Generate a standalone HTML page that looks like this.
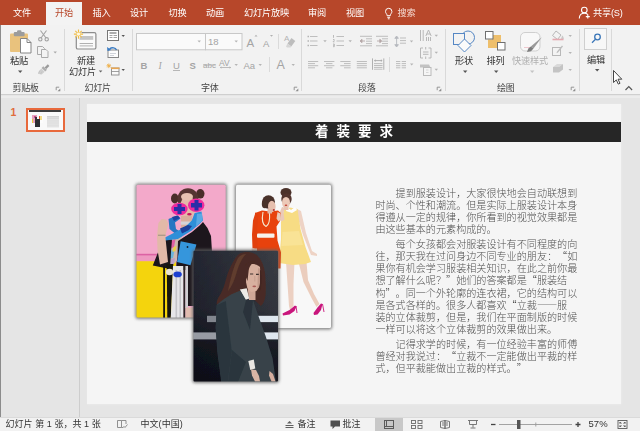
<!DOCTYPE html>
<html lang="zh-CN">
<head>
<meta charset="utf-8">
<title>PowerPoint</title>
<style>
*{margin:0;padding:0;box-sizing:border-box;}
html,body{width:640px;height:431px;overflow:hidden;background:#e6e6e6;}
body{position:relative;font-family:"Liberation Sans","Noto Sans CJK SC",sans-serif;font-size:10px;color:#333;}
.abs{position:absolute;}
#tabbar{opacity:0.999;position:absolute;left:0;top:0;width:640px;height:25px;background:#b7472a;}
.tab{position:absolute;top:5.500px;font-size:9.2px;color:#fff;white-space:nowrap;line-height:14px;letter-spacing:-0.2px;}
#tab-active{position:absolute;left:46px;top:2px;width:36px;height:24px;background:#f3f3f3;}
#ribbon{opacity:0.999;position:absolute;left:0;top:25px;width:640px;height:69.5px;background:#f2f2f2;border-bottom:1px solid #cfcfcf;}
.glabel{position:absolute;top:56.500px;font-size:9px;color:#444;white-space:nowrap;line-height:12px;letter-spacing:-0.2px;}
.blabel{position:absolute;font-size:9.2px;color:#333;white-space:nowrap;line-height:11px;letter-spacing:-0.2px;text-align:center;}
.vsep{position:absolute;top:4px;width:1px;height:60px;background:#dcdcdc;}
#work{position:absolute;left:0;top:96px;width:640px;height:321px;background:#e5e5e5;}
#leftpane{position:absolute;left:0;top:96px;width:80px;height:321px;background:#e5e5e5;border-right:1px solid #cdcdcd;}
#slide{position:absolute;left:87px;top:103px;width:535px;height:301px;}
#slidebg{position:absolute;left:0.3px;top:0.6px;width:534px;height:300.5px;background:#f5f5f5;box-shadow:0 0 1.5px 0.5px #efefef;}
#titlebar{position:absolute;left:0.3px;top:19px;width:534px;height:20px;background:#262626;}
#title{position:absolute;left:0;top:19px;width:535px;height:20px;line-height:19px;text-align:center;color:#fff;font-weight:bold;font-size:13.5px;letter-spacing:8px;padding-left:7px;opacity:0.999;}
#text{position:absolute;left:288.4px;top:84.6px;width:204px;color:#505050;font-size:10.1px;line-height:12.2px;font-weight:300;opacity:0.999;text-spacing-trim:space-all;}
#text p{text-indent:20.2px;margin-bottom:2.4px;white-space:nowrap;}
#text q{quotes:none;font-family:"Noto Sans CJK SC",sans-serif;line-height:0;}
#status{opacity:0.999;position:absolute;left:0;top:417.6px;width:640px;height:13.4px;background:#f2f2f2;box-shadow:0 -1px 0 #dadada;}
.st{position:absolute;top:0.9px;font-size:9px;color:#333;white-space:nowrap;line-height:12px;letter-spacing:0.05px;}
</style>
</head>
<body>
<div id="tabbar">
  <div id="tab-active"></div>
  <span class="tab" style="left:13px">文件</span>
  <span class="tab" style="left:55px;color:#b7472a">开始</span>
  <span class="tab" style="left:92.5px">插入</span>
  <span class="tab" style="left:130px">设计</span>
  <span class="tab" style="left:168.5px">切换</span>
  <span class="tab" style="left:206px">动画</span>
  <span class="tab" style="left:244px">幻灯片放映</span>
  <span class="tab" style="left:308px">审阅</span>
  <span class="tab" style="left:346px">视图</span>
  <span class="tab" style="left:397.5px;color:#f6ddd5">搜索</span>
  <span class="tab" style="left:593px">共享(S)</span>
</div>
<div id="ribbon">
  <span class="blabel" style="left:9px;top:30.500px;width:20px">粘贴</span>
  <span class="blabel" style="left:76px;top:30.500px;width:20px">新建</span>
  <span class="blabel" style="left:68px;top:41.5px;width:29px">幻灯片</span>
  <span class="blabel" style="left:454px;top:30.500px;width:20px">形状</span>
  <span class="blabel" style="left:485.5px;top:30.5px;width:20px">排列</span>
  <span class="blabel" style="left:510px;top:30.500px;width:40px;color:#b0b0b0">快速样式</span>
  <span class="blabel" style="left:586px;top:29.600px;width:20px">编辑</span>
  <span class="glabel" style="left:12.5px">剪贴板</span>
  <span class="glabel" style="left:84.5px">幻灯片</span>
  <span class="glabel" style="left:201px">字体</span>
  <span class="glabel" style="left:358px">段落</span>
  <span class="glabel" style="left:497px">绘图</span>
</div>
<svg id="icons" class="abs" style="left:0;top:0" width="640" height="96" viewBox="0 0 640 96" fill="none" stroke-linecap="butt">
  <!-- lightbulb -->
  <g stroke="#fff" stroke-width="1" fill="none">
    <path d="M385.5 11.5a3.2 3.2 0 0 1 6.4 0c0 1.8-1.6 2.4-1.6 4.2h-3.2c0-1.8-1.6-2.4-1.6-4.2z"/>
    <path d="M387.3 17.3h2.8M387.8 18.8h1.8"/>
  </g>
  <!-- share person -->
  <g stroke="#fff" stroke-width="1.1" fill="none">
    <circle cx="584.3" cy="10" r="2.8"/>
    <path d="M579.3 18.5c0-3.5 2.2-5.4 5-5.4 1.6 0 2.8 0.6 3.6 1.5"/>
    <path d="M587.8 14.6v4M585.8 16.6h4"/>
  </g>

  <!-- separators -->
  <g stroke="#d9d9d9" stroke-width="1">
    <path d="M64.5 29v62M132.5 29v62M301.5 29v62M445.5 29v62M579.5 29v62M611.5 29v62"/>
  </g>

  <!-- paste icon -->
  <g>
    <rect x="10" y="33.5" width="18" height="18.5" rx="1" fill="#e9c27d"/>
    <rect x="13.8" y="32" width="10.8" height="4.3" rx="1" fill="#9c9c9c"/>
    <rect x="17" y="30.300" width="4.500" height="3" rx="1.300" fill="#9c9c9c"/>
    <path d="M20.5 38.5h6.5l4 4v10.5h-10.5z" fill="#fff" stroke="#858585" stroke-width="1"/>
    <path d="M27 38.5v4h4" stroke="#858585" stroke-width="1" fill="none"/>
  </g>
  <path d="M18 70.5l2.2 2.4 2.2-2.4z" fill="#555"/>

  <!-- scissors (gray) -->
  <g stroke="#a3a3a3" stroke-width="1.1" fill="none">
    <path d="M40.5 30.5l5.5 7.5M46.5 30.5l-5.5 7.5"/>
    <circle cx="40.3" cy="39.3" r="1.7"/>
    <circle cx="46.7" cy="39.3" r="1.7"/>
  </g>
  <!-- copy (gray) -->
  <g stroke="#a9a9a9" stroke-width="1" fill="#f3f3f3">
    <path d="M37.5 46.5h5l2 2v6h-7z"/>
    <path d="M41.500 49.5h4.500l2 2v6h-6.500z"/>
  </g>
  <path d="M53.500 51.500l1.700 1.900 1.700-1.900z" fill="#aaa"/>
  <!-- format painter (gray) -->
  <g>
    <path d="M47.800 64.300l1.600 1.600-3 3.200-1.800-1.600z" fill="#9a9a9a"/>
    <path d="M43.300 66.300l3.600 3.400-1.600 1.800-3.700-3.400z" fill="#adadad"/>
    <path d="M41.300 68.600l3.400 3.200-3 2.600-3.600-0.600 0.500-2.200z" fill="#cfcfcf"/>
    <path d="M40 70.500l-1.500 3M42 71.500l-1.600 2.700" stroke="#bdbdbd" stroke-width="0.600"/>
  </g>
  <!-- launcher marks -->
  <g stroke="#8c8c8c" stroke-width="0.9" fill="none">
    <path d="M56 87.500h-0v0M56.200 87.200h3M56.200 87.200v3"/>
    <path d="M294.200 87.200h3M294.200 87.200v3"/>
    <path d="M437.200 87.200h3M437.200 87.200v3"/>
    <path d="M571.200 87.200h3M571.200 87.200v3"/>
  </g>
  <g fill="#8c8c8c">
    <path d="M60.300 88.500v2.800h-2.800z"/><path d="M298.300 88.500v2.800h-2.800z"/><path d="M441.300 88.500v2.800h-2.800z"/><path d="M575.300 88.500v2.800h-2.800z"/>
  </g>

  <!-- new slide -->
  <g>
    <rect x="76.300" y="32.600" width="19.600" height="16.400" rx="1.600" fill="#fafafa" stroke="#8c8c8c" stroke-width="1.200"/>
    <rect x="79.600" y="36" width="13.600" height="3.800" fill="#c4c4c4"/>
    <path d="M79.600 43.500h13.400M79.600 45.900h13.400" stroke="#a8a8a8" stroke-width="0.900"/>
    <circle cx="78.500" cy="34.100" r="3.400" fill="#f3f3f3"/>
    <g stroke="#f1bd45" stroke-width="1.100">
      <path d="M78.500 29.500v9.200M73.900 34.100h9.200M75.300 30.900l6.400 6.400M81.700 30.900l-6.400 6.400"/>
    </g>
    <circle cx="78.500" cy="34.100" r="1.700" fill="#fff8e0"/>
  </g>
  <path d="M98.800 70.600l1.800 2 1.800-2z" fill="#666"/>
  <!-- layout -->
  <g>
    <rect x="107.500" y="30.500" width="11" height="10" fill="#fff" stroke="#777" stroke-width="1"/>
    <path d="M109.500 33h7" stroke="#8a8a8a" stroke-width="1.400"/>
    <path d="M109.500 35.500h3M109.500 37.500h3M113.500 35.500h3.500M113.500 37.500h3.500" stroke="#9a9a9a" stroke-width="0.900"/>
  </g>
  <path d="M121.500 35l1.700 1.900 1.700-1.900z" fill="#555"/>
  <!-- reset -->
  <g>
    <rect x="108" y="50" width="10.500" height="7.500" fill="#fdfdfd" stroke="#888" stroke-width="1"/>
    <path d="M110 53.500h6M110 55.500h4" stroke="#c4c8d0" stroke-width="0.800"/>
    <path d="M116.500 50c-1-2.300-4.500-3-7-1" stroke="#3a7cc4" stroke-width="1.400" fill="none"/>
    <path d="M107 47l0.500 4 3.800-1z" fill="#3a7cc4"/>
  </g>
  <!-- section -->
  <g>
    <g stroke="#eeb04a" stroke-width="0.900"><path d="M108.800 63.500v4.600M106.500 65.800h4.600M107.200 64.200l3.200 3.200M110.400 64.200l-3.200 3.200"/></g>
    <rect x="111.500" y="68" width="7.500" height="7" fill="#fafafa" stroke="#8a8a8a" stroke-width="0.900"/>
    <path d="M111 68.300h8.500" stroke="#e8a652" stroke-width="1.600"/>
    <path d="M111.500 71.500h7.500" stroke="#8a8a8a" stroke-width="0.800"/>
  </g>
  <path d="M121.500 69l1.700 1.900 1.700-1.900z" fill="#555"/>

  <!-- font boxes -->
  <rect x="136.500" y="33.500" width="69" height="16.300" fill="#fafafa" stroke="#c8c8c8" stroke-width="1"/>
  <rect x="205.500" y="33.500" width="36.500" height="16.300" fill="#fafafa" stroke="#c8c8c8" stroke-width="1"/>
  <path d="M197.500 40.500l1.700 1.900 1.700-1.900z" fill="#b5b5b5"/>
  <path d="M234.500 40.500l1.700 1.900 1.700-1.900z" fill="#b5b5b5"/>
  <path d="M278.500 34v15M269.500 57v15" stroke="#dadada" stroke-width="1"/>
  <!-- font letters -->
  <g font-family="Liberation Sans, sans-serif" fill="#a4a4a4">
    <text x="208" y="45" font-size="9.500">18</text>
    <text x="246.500" y="46.500" font-size="11.500">A</text>
    <text x="263" y="46.500" font-size="9.500">A</text>
    <text x="140.500" y="68.500" font-size="9.500" font-weight="bold">B</text>
    <text x="158.500" y="68.500" font-size="9.500" font-style="italic" font-family="Liberation Serif, serif">I</text>
    <text x="173" y="68.500" font-size="9.500">U</text>
    <text x="189.500" y="68.500" font-size="9.500" font-weight="bold">S</text>
    <text x="203" y="68" font-size="8">abc</text>
    <text x="219" y="66" font-size="8.500">AV</text>
    <text x="243.500" y="68.500" font-size="9.500">Aa</text>
    <text x="276.500" y="69" font-size="12.500">A</text>
  </g>
  <path d="M173 70.500h7M203 65h12.500" stroke="#b0b0b0" stroke-width="0.900"/>
  <path d="M254.500 36.500l1.500-1.800 1.500 1.800zM270 35l1.500 1.800 1.500-1.800z" fill="#b0b0b0"/>
  <!-- clear formatting -->
  <g>
    <text x="284" y="41" font-size="8" font-family="Liberation Sans, sans-serif" fill="#b4b4b4">A</text>
    <path d="M291.500 38l3.800 3-4 5.500-3.800-3z" fill="#bdbdbd"/>
    <path d="M287.500 43.500l3.800 3-0.800 1h-3.500l-1-1z" fill="#d6d6d6"/>
  </g>
  <!-- small arrows font row 2 -->
  <g fill="#b5b5b5">
    <path d="M234.500 64l1.700 1.900 1.700-1.900z"/>
    <path d="M258.500 64l1.700 1.900 1.700-1.900z"/>
    <path d="M291.500 64l1.700 1.900 1.700-1.900z"/>
  </g>
  <path d="M220 67.500h11" stroke="#b5b5b5" stroke-width="0.900"/>
  <path d="M220 67.500l1.500-1.300v2.600zM231 67.500l-1.500-1.300v2.600z" fill="#b5b5b5"/>

  <!-- paragraph group row 1 -->
  <g stroke="#bababa" stroke-width="0.950">
    <path d="M310 36.500h7.500M310 41h7.500M310 45.500h7.500"/>
    <path d="M336.500 36.500h7.500M336.500 41h7.500M336.500 45.500h7.500"/>
    <path d="M360 36.300h12M366 38.800h6M366 41.200h6M366 43.600h6M360 45.800h12"/>
    <path d="M376 36.300h12M382 38.800h6M382 41.200h6M382 43.600h6M376 45.800h12"/>
    <path d="M400 38h6M400 40.600h6M400 43.200h6"/>
  </g>
  <g stroke="#b4b4b4" stroke-width="1.300">
    <path d="M307.500 36.500h1.500M307.500 41h1.500M307.500 45.500h1.500"/>
  </g>
  <g stroke="#b4b4b4" stroke-width="0.900">
    <path d="M333.500 35v2.800M333 39.500h1.200v1l-1.200 1.300h1.500M333 44h1.300v1.300h-1 1v1.400h-1.300"/>
  </g>
  <g stroke="#b5a8a8" stroke-width="0.900" fill="#b5a8a8">
    <path d="M360.500 41h4.500M377 41h4" fill="none"/>
    <path d="M360 41l2-1.700v3.400zM381.800 41l-2-1.700v3.400z"/>
  </g>
  <g stroke="#b6b9be" stroke-width="0.900" fill="#b6b9be">
    <path d="M396.600 37.500v8" fill="none"/>
    <path d="M396.600 36l1.800 2.300h-3.600zM396.600 47l1.800-2.300h-3.600z"/>
  </g>
  <g fill="#b5b5b5">
    <path d="M323.300 40.300l1.700 1.900 1.700-1.900z"/>
    <path d="M348.500 40.300l1.700 1.900 1.700-1.900z"/>
    <path d="M409.800 40.500l1.700 1.900 1.700-1.900z"/>
    <path d="M434.600 34.800l1.700 1.900 1.700-1.900z"/>
    <path d="M434.600 51.800l1.700 1.900 1.700-1.900z"/>
    <path d="M434.600 68.800l1.700 1.900 1.700-1.900z"/>
    <path d="M410 63.600l1.700 1.900 1.700-1.900z"/>
  </g>
  <!-- text direction -->
  <g stroke="#b4b4b4" stroke-width="0.950" fill="none">
    <path d="M420.500 30v11M423.200 30v11"/>
    <path d="M425.800 36l2.700-6 2.700 6M426.800 34h3.400"/>
    <path d="M426.500 37v4M428.500 37v4M430.500 37v4"/>
  </g>
  <!-- align text -->
  <g stroke="#b4b4b4" stroke-width="0.950" fill="none">
    <path d="M423 48h-2.500v10h2.500M428.500 48h2.500v10h-2.500"/>
    <path d="M423 52h5.500M423 54.300h5.500"/>
    <path d="M425.700 47v2.500M425.700 56.500v2.500"/>
  </g>
  <!-- smartart -->
  <g>
    <path d="M420 64.500h9l1.500 3h-10.500z" fill="#c2c2c2"/>
    <rect x="423.500" y="67.500" width="7.500" height="8" fill="#f5f5f5" stroke="#b8b8b8" stroke-width="0.950"/>
    <path d="M426 70h2.500M426 72.500h2.500" stroke="#cfcfcf" stroke-width="0.800"/>
  </g>
  <!-- paragraph row 2 -->
  <g stroke="#bababa" stroke-width="0.950">
    <path d="M308 61.500h10.200M308 63.600h7M308 65.700h10.200M308 67.800h7"/>
    <path d="M324 61.500h10.400M326 63.600h6.400M324 65.700h10.400M326 67.800h6.400"/>
    <path d="M340.300 61.500h10.300M344 63.600h6.600M340.300 65.700h10.300M344 67.800h6.600"/>
    <path d="M356.800 61.500h10.100M356.800 63.600h10.100M356.800 65.700h10.100M356.800 67.800h10.100"/>
    <path d="M374 63.600h8.500M374 65.500h8.500M374 67.400h8.500M374 69.200h8.500"/>
    <path d="M372.500 58.400v11.400M383.800 58.400v11.400M374.500 60.600h7.500" stroke="#adadad"/>
    <path d="M396 61.500h4.300M401.700 61.500h4.300M396 63.600h4.300M401.700 63.600h4.300M396 65.700h4.300M401.700 65.700h4.300M396 67.800h4.300M401.700 67.800h4.300"/>
  </g>
  <path d="M374 60.600l1.600-1.300v2.600zM382.500 60.600l-1.600-1.300v2.600z" fill="#adadad"/>
  <path d="M389.500 57v15" stroke="#dadada" stroke-width="1"/>

  <!-- shapes icon -->
  <g fill="none" stroke="#5587c4" stroke-width="1">
    <circle cx="468" cy="37.500" r="6.500"/>
    <rect x="453.500" y="33.500" width="11" height="11" fill="#f3f3f3"/>
    <path d="M464.500 39l6.500 6.500-6.500 6.500-6.500-6.500z" fill="#fbfbfb"/>
  </g>
  <path d="M463 70.500l2.200 2.400 2.200-2.400z" fill="#555"/>
  <!-- arrange icon -->
  <g>
    <rect x="492" y="35" width="9" height="9" fill="#eebf6c"/>
    <rect x="488" y="39.500" width="9" height="8.500" fill="#eebf6c"/>
    <rect x="485.500" y="31.500" width="7.500" height="7.500" fill="#fff" stroke="#6f6f6f" stroke-width="1"/>
    <rect x="497.500" y="42.500" width="7.500" height="7.500" fill="#fff" stroke="#6f6f6f" stroke-width="1"/>
  </g>
  <path d="M494 70.500l2.200 2.400 2.200-2.400z" fill="#555"/>
  <!-- quick styles -->
  <g>
    <rect x="520.500" y="32.500" width="19.500" height="18.500" rx="4.500" fill="#f8f8f8" stroke="#cfcfcf" stroke-width="1"/>
    <path d="M524 47.500h6" stroke="#ecc2ca" stroke-width="0.900"/>
    <path d="M541.800 37.200l-8.300 11.300-2.700-2z" fill="#9a9a9a"/>
    <path d="M530.800 46.500l2.700 2-2.500 2.800-4 0.700 1.300-3.500z" fill="#7e7e7e"/>
  </g>
  <path d="M530 70.500l2.200 2.400 2.200-2.400z" fill="#c4c4c4"/>
  <!-- fill / outline / effects -->
  <g>
    <path d="M556 31l5 4-3.500 4.500-5-4z" fill="#f3f3f3" stroke="#b8b8b8" stroke-width="1"/>
    <path d="M562.500 35.500c0.800 1.200 1.200 2 1.200 2.700a1.200 1.200 0 0 1-2.400 0c0-0.700 0.400-1.500 1.200-2.700z" fill="#c9c9c9"/>
    <path d="M552.500 39.500h11" stroke="#e4a9b0" stroke-width="1.600"/>
    <rect x="552.500" y="47.500" width="8" height="8" fill="#f3f3f3" stroke="#b8b8b8" stroke-width="1"/>
    <path d="M563 46.500l-5 6-1.500 0.800 0.500-1.800 5-6z" fill="#bdbdbd"/>
    <path d="M553 67l4-3h6l-4 3z" fill="#d9d9d9"/>
    <path d="M553 67h6v5.500h-6zM559 67l4-3v5.500l-4 3z" fill="#c4c4c4"/>
  </g>
  <g fill="#b5b5b5">
    <path d="M568.500 35l1.700 1.900 1.700-1.900z"/>
    <path d="M568.500 52l1.700 1.900 1.700-1.900z"/>
    <path d="M568.500 69l1.700 1.900 1.700-1.900z"/>
  </g>
  <!-- edit -->
  <rect x="584.500" y="28.500" width="22" height="21" fill="#f7f7f7" stroke="#cfcfcf" stroke-width="1"/>
  <g stroke="#3a76b8" stroke-width="1.300" fill="none">
    <circle cx="597.500" cy="37" r="2.800"/>
    <path d="M595.500 39.200l-3.500 3.500"/>
  </g>
  <path d="M595 69l2.200 2.400 2.200-2.400z" fill="#555"/>
  <!-- mouse cursor -->
  <path d="M613.500 70.500v12l2.800-2.600 2 4.200 1.700-0.800-2-4.100h3.800z" fill="#fff" stroke="#333" stroke-width="0.900" stroke-linejoin="round"/>
  <!-- collapse chevron -->
  <path d="M625.500 90l3.300-3.300 3.300 3.300" stroke="#555" stroke-width="1.200" fill="none"/>
</svg>
<div id="work"></div>
<div id="leftpane"></div>
<div id="band" class="abs" style="left:1px;top:95.5px;width:639px;height:2px;background:#ececec"></div>
<span class="abs" style="left:10.6px;top:106.2px;font-size:10.5px;line-height:12px;color:#e06c3c;font-weight:bold;font-family:'Liberation Sans',sans-serif">1</span>
<div class="abs" id="thumb" style="left:26px;top:107.7px;width:39px;height:24.1px;border:2.6px solid #e8693c;background:#f9f9f9;overflow:hidden">
  <div class="abs" style="left:0.5px;top:0.8px;width:32.8px;height:1.7px;background:#3c3c3c"></div>
  <div class="abs" style="left:3.5px;top:5.2px;width:5.5px;height:8px;background:#e9a1bd"></div>
  <div class="abs" style="left:3.5px;top:9.7px;width:1.7px;height:3.5px;background:#ecd038"></div>
  <div class="abs" style="left:6px;top:6px;width:2px;height:2px;background:#c0508a"></div>
  <div class="abs" style="left:9.5px;top:5.2px;width:5.7px;height:8.6px;background:#fcfcfc"></div>
  <div class="abs" style="left:10.8px;top:6.7px;width:1.6px;height:2.7px;background:#e8602a"></div>
  <div class="abs" style="left:12.4px;top:6.7px;width:1.6px;height:4px;background:#f3dc8a"></div>
  <div class="abs" style="left:7px;top:9.2px;width:5px;height:8px;background:#2c2e33"></div>
  <div class="abs" style="left:6.5px;top:7.5px;width:2px;height:3px;background:#3a3036"></div>
  <div class="abs" style="left:18.5px;top:6px;width:12.5px;height:0.6px;background:#d2d2d2;box-shadow:0 1px 0 #dcdcdc,0 2px 0 #d8d8d8,0 3.2px 0 #dedede,0 4.2px 0 #dadada,0 5.2px 0 #dedede,0 6.2px 0 #dcdcdc,0 7.2px 0 #dedede,0 8.4px 0 #d6d6d6,0 9.4px 0 #dadada,0 10.4px 0 #e0e0e0"></div>
</div>
<div id="slide">
  <div id="slidebg"></div>
  <div id="titlebar"></div>
  <div id="title">着装要求</div>
  <div id="text">
    <p>提到服装设计，大家很快地会自动联想到<br>时尚、个性和潮流。但是实际上服装设计本身<br>得遵从一定的规律，你所看到的视觉效果都是<br>由这些基本的元素构成的。</p>
    <p>每个女孩都会对服装设计有不同程度的向<br>往，那天我在过问身边不同专业的朋友：<q>“</q>如<br>果你有机会学习服装相关知识，在此之前你最<br>想了解什么呢？<q>”</q>她们的答案都是<q>“</q>服装结<br>构<q>”</q>。同一个外轮廓的连衣裙，它的结构可以<br>是各式各样的。很多人都喜欢<q>“</q>立裁<q>——</q>服<br>装的立体裁剪，但是，我们在平面制版的时候<br>一样可以将这个立体裁剪的效果做出来。</p>
    <p>记得求学的时候，有一位经验丰富的师傅<br>曾经对我说过：<q>“</q>立裁不一定能做出平裁的样<br>式，但平裁能做出立裁的样式。<q>”</q></p>
  </div>
</div>
<svg id="photos" class="abs" style="left:0;top:0" width="640" height="431" viewBox="0 0 640 431">
  <defs>
    <filter id="sh" x="-10%" y="-10%" width="120%" height="120%"><feGaussianBlur stdDeviation="1.400"/></filter>
    <filter id="b1" x="-5%" y="-5%" width="110%" height="110%"><feGaussianBlur stdDeviation="0.5"/></filter>
    <clipPath id="c1"><rect x="136.500" y="184.700" width="89.200" height="132.800" rx="1.500"/></clipPath>
    <clipPath id="c2"><rect x="236" y="184.700" width="95" height="143.300" rx="1.500"/></clipPath>
    <clipPath id="c3"><rect x="193.500" y="250.700" width="84.500" height="130.800" rx="1"/></clipPath>
    <linearGradient id="dg" x1="0" y1="0" x2="1" y2="0">
      <stop offset="0" stop-color="#232631"/><stop offset="0.450" stop-color="#2d3039"/><stop offset="1" stop-color="#3b3e46"/>
    </linearGradient>
    <linearGradient id="dg2" x1="0" y1="0" x2="0" y2="1">
      <stop offset="0" stop-color="#000" stop-opacity="0"/><stop offset="0.450" stop-color="#02030a" stop-opacity="0.150"/><stop offset="0.750" stop-color="#04050e" stop-opacity="0.600"/><stop offset="1" stop-color="#05060f" stop-opacity="0.750"/>
    </linearGradient>
  </defs>

  <!-- PHOTO 1 : pink -->
  <rect x="135.300" y="183.500" width="91.600" height="135.400" rx="3" fill="#6e6e6e" opacity="0.850" filter="url(#sh)"/>
  <g clip-path="url(#c1)" filter="url(#b1)">
    <rect x="136" y="184" width="91" height="134" fill="#f3a9ca"/>
    <rect x="136" y="255" width="91" height="6.500" fill="#ee99c1"/>
    <rect x="136" y="253.800" width="91" height="1.600" fill="#dc62a4"/>
    <rect x="136" y="261.200" width="40" height="58" fill="#f4d40c"/>
    <!-- hair -->
    <ellipse cx="174.800" cy="198.500" rx="3.800" ry="5" fill="#4a2f2a"/>
    <ellipse cx="200.300" cy="193.800" rx="4.200" ry="4.800" fill="#4a2f2a"/>
    <ellipse cx="188" cy="199" rx="10.500" ry="10.800" fill="#553630"/>
    <!-- face -->
    <ellipse cx="187.800" cy="207.500" rx="7.800" ry="11.500" fill="#e3b9a8"/>
    <ellipse cx="187" cy="196.800" rx="6" ry="3.800" fill="#e6c2b1"/>
    <!-- neck / choker -->
    <rect x="181" y="216" width="11" height="12" fill="#d9ae9d"/>
    <rect x="180.800" y="221.500" width="10" height="3.200" fill="#d4d4d8"/>
    <!-- inner colorful top -->
    <path d="M168 236l8-3 6 3-6 26-8 6z" fill="#cdb8ae"/>
    <path d="M170.500 241l5-2-1.500 8-4 2z" fill="#df5fa2"/>
    <path d="M170 251l4.500-1-1.500 8-3.500 1z" fill="#6cb4dc"/>
    <path d="M173.500 247l3-1-1 5-3 1z" fill="#ecd048"/>
    <path d="M171 259l4-1-1 6-4 2z" fill="#b8a0c8"/>
    <!-- black jacket -->
    <path d="M203 222l4.500 6 3.500 8 1 16v18h-35l1-29 14-9 7.600-6.500z" fill="#1c171c"/>
    <path d="M176.500 262l7-24 10-6 0 36-17.500 2z" fill="#1d181d"/>
    <path d="M163.500 238.500l8.500 1-1 12-1 17.500-17.200-3.500z" fill="#1a161a"/>
    <!-- blue phone left -->
    <path d="M168.500 219l8.500-3.500 3.500 3-5.500 4 1 6.500 4.500 3-3 3.500-8-6.500z" fill="#2576c2"/>
    <path d="M172 217l6-1.500 2 2.500-6 3z" fill="#1b3fa0"/>
    <!-- blue hood + band -->
    <path d="M194.600 213l6.900-1.500 1.500 9-3.600 3.500-7.600 6.500-13.900 8.500-12.600 1.400-1.300-2.400 9.700-5 11.100-5.700 7-6.900z" fill="#2f8fd8"/>
    <path d="M197 214l5-0.500 0.500 7-6.500 6z" fill="#5aa9e4"/>
    <path d="M180 228.500l8-3.500 4 1-3 4-7 3.500z" fill="#1a3f9a"/>
    <!-- hand & arm -->
    <path d="M158.400 223l3.200-4 4.700 0.500 2 4-1.600 7-1.400 5.500 2.700 26-8 2.500-2.400-14-0.600-14z" fill="#e2b9a8"/>
    <path d="M158 235.300h7.500" stroke="#a98" stroke-width="1.300"/>
    <!-- blue pocket -->
    <path d="M180.700 241.300l15.700 3.100-5.900 20.900-13.500-3.300z" fill="#3596dc"/>
    <circle cx="187.500" cy="247" r="0.900" fill="#123"/>
    <!-- skirt -->
    <rect x="163.200" y="266" width="1.800" height="52" fill="#15120f"/>
    <path d="M166.800 264h6.500l-2.500 54h-3.500z" fill="#17130f"/>
    <path d="M173 266h10.500v52h-12.700z" fill="#e6e6e8"/>
    <rect x="175.500" y="270" width="1.600" height="48" fill="#c4c4c8"/>
    <rect x="179.500" y="270" width="1.400" height="48" fill="#bfbfc4"/>
    <rect x="183.400" y="266" width="2" height="52" fill="#2a2528"/>
    <rect x="185.400" y="266" width="2.600" height="42" fill="#cfcfd3"/>
    <rect x="188" y="266" width="8" height="40" fill="#1b171b"/>
    <path d="M185.500 307.500h7.500v11h-7.500z" fill="#e0bcb0"/>
    <!-- flowers -->
    <ellipse cx="169.500" cy="272" rx="3.600" ry="3.200" fill="#e9e4d4"/>
    <ellipse cx="177.600" cy="274.400" rx="4.200" ry="2.800" fill="#1f3fd0"/>
    <!-- sunglasses -->
    <g fill="#ee2a9e">
      <ellipse cx="179.400" cy="209" rx="8.200" ry="6.300"/>
      <ellipse cx="196.200" cy="205.200" rx="8.200" ry="6.800"/>
    </g>
    <g fill="#2a2fa8">
      <path d="M177.500 204h4v3h3.500v4h-3.500v3h-4v-3h-3.500v-4h3.500z"/>
      <path d="M194.500 200h4v3h3.500v4.500h-3.500v3h-4v-3h-3.500v-4.500h3.500z"/>
    </g>
    <!-- lips -->
    <ellipse cx="189.400" cy="214.300" rx="2.300" ry="1.300" fill="#c2185b"/>
  </g>

  <!-- PHOTO 2 : white -->
  <rect x="234.800" y="183.500" width="97.400" height="145.900" rx="3" fill="#6e6e6e" opacity="0.850" filter="url(#sh)"/>
  <g clip-path="url(#c2)" filter="url(#b1)">
    <rect x="235" y="184" width="97" height="145" fill="#f8f8f8"/>
    <!-- woman 2 (yellow) legs -->
    <path d="M286 262h8.500l-1 22 0 22-3.500 4-1-4-1.500-22z" fill="#ecd0c2"/>
    <path d="M298.500 262h8l1.500 18 6 14 5.500 10-3 3-5-9-8-16z" fill="#ebcdbd"/>
    <!-- shoes -->
    <path d="M282.500 313.500l7-3.500 5.500-4.500 1.500 1-2 4.500-5 3.500-6.500 1z" fill="#c9147c"/>
    <path d="M296 306l1 7" stroke="#c9147c" stroke-width="0.900"/>
    <path d="M313.500 313l4-5.500 3.500-4 1.500 0.500-1.500 6-3.500 4.500-3.500 0.500z" fill="#c9147c"/>
    <path d="M322.500 304l1.500 8" stroke="#c9147c" stroke-width="0.900"/>
    <!-- arm right of yellow -->
    <path d="M297 209l4 2 5 22 6 18 5 3 0 2-6-1-8-20-6-20z" fill="#eed3c5"/>
    <!-- yellow dress -->
    <path d="M284 209.500L290 207.500L297.500 209L300.500 229L305.500 247L311 262L305 264L293 265L279 263L281 239L281 222Z" fill="#f7dc84"/>
    <path d="M282.500 232l16.500-1 4 14-21.500 1z" fill="#f9e396"/>
    <!-- collar -->
    <path d="M287 207l4 3 4-3 2 3-5 3-6-2z" fill="#fdfdfd"/>
    <!-- woman 2 head -->
    <ellipse cx="286" cy="192.500" rx="5.500" ry="4.500" fill="#4b312b"/>
    <ellipse cx="286.500" cy="199" rx="5.200" ry="6" fill="#52352e"/>
    <ellipse cx="286" cy="202.500" rx="4" ry="5.500" fill="#ecc9b8"/>
    <rect x="284" y="206" width="4.500" height="4" fill="#e8c3b2"/>
    <ellipse cx="286" cy="205.300" rx="1.300" ry="0.800" fill="#c0392b"/>
    <!-- hand to mouth -->
    <path d="M279 214l3-7 2.500 0.500-1 6 1 6-3 2-3-3z" fill="#eac9b9"/>
    <!-- woman 1 orange dress -->
    <path d="M255 213l7-2.500 8 1 8-1 2.800 2.500-0.800 8-3.500 5.500 1 14 3.500 12-0.500 16h-25l-1.500-18 2.500-14-1-12z" fill="#e8430c"/>
    <path d="M255.500 212.500l3 1.500-1.500 16 0.500 18.500-5 0-0.500-14 1-14z" fill="#e23f0a"/>
    <path d="M251.500 248.500h5.500v3h-5z" fill="#e8c6b6"/>
    <path d="M277.500 212l3 1.500 0.500 6-2.500 2-2-3z" fill="#eac9b9"/>
    <!-- belt -->
    <rect x="257" y="233.500" width="17.500" height="4.200" rx="1" fill="#f7f2ec"/>
    <!-- necklace -->
    <path d="M263 212c-1.500 8 0 13 3 14.500 3-1.500 4-7 3.500-14" stroke="#f4e9d2" stroke-width="1.100" fill="none"/>
    <!-- woman 1 head -->
    <ellipse cx="268.500" cy="202" rx="6.500" ry="6.800" fill="#4a302a"/>
    <ellipse cx="264.800" cy="204" rx="3" ry="4.200" fill="#4a302a"/>
    <ellipse cx="271.800" cy="206.500" rx="3.800" ry="5.800" fill="#e6bfae"/>
    <rect x="267.500" y="209" width="4.500" height="4.500" fill="#e0b8a7"/>
    <ellipse cx="273.800" cy="210" rx="1.100" ry="0.900" fill="#b03a3a"/>
  </g>

  <!-- PHOTO 3 : dark -->
  <rect x="192.300" y="249.500" width="86.900" height="133.400" rx="3" fill="#666" opacity="0.850" filter="url(#sh)"/>
  <g clip-path="url(#c3)" filter="url(#b1)">
    <rect x="193" y="250" width="86" height="132" fill="url(#dg)"/>
    <rect x="193" y="250" width="86" height="132" fill="url(#dg2)"/>
    <!-- stripes -->
    <rect x="207" y="315.800" width="16" height="6.300" fill="#82868e"/>
    <rect x="256" y="315.800" width="22" height="6.300" fill="#dfe7ef"/>
    <rect x="193" y="332.400" width="26" height="7" fill="#979ba3"/>
    <rect x="261" y="332.400" width="17" height="7" fill="#dfe7ef"/>
    <!-- hair -->
    <path d="M242 252.700c6-1.500 12 0 15.700 3.200 4 4 6.500 10 7.300 17 0.800 8 1 16 0.600 22-0.500 5-2.500 9-4.700 11l-6.300-6-3-2-8-4-9 1-3.600 0.700-8 5-6.200 4c-0.500-3 1-6.500 3.200-9.600 3-5 4.500-10 6-15.500 1.500-6 4-13 8-19 2-4 5-7.500 8-7.800z" fill="#4a2c25"/>
    <path d="M238 258c2-2.500 5-4 8-4-4 4-7 10-9 17-2 8-5 15-9 20 2-9 5-24 10-33z" fill="#603c2e"/>
    <!-- neck -->
    <path d="M247.500 287l8 0 0 13-6.500 0z" fill="#cfa797"/>
    <!-- face -->
    <path d="M246 265.300c4-2 10.500-2 14 1.700l0.900 12.500-1.500 7-3 4.600-5.400 0.900-3.600-4-1.300-5.300z" fill="#d8b09f"/>
    <path d="M258 268l2.500 1 0.400 11-1.500 6-2 3z" fill="#c39a8a"/>
    <path d="M245 266c2-3.500 6-5 10-4-4 1.500-6 5-6.500 10l-1 9-2.500-6z" fill="#4a2c25"/>
    <path d="M260 267c2 6 2.500 14 1 22l-2.500 3 1.500-9z" fill="#432722"/>
    <path d="M250 274h3.200M256 274.300h2.800" stroke="#3f302f" stroke-width="1.200"/>
    <path d="M254.800 276v5.500" stroke="#c39a8a" stroke-width="0.800"/>
    <ellipse cx="254.300" cy="286.300" rx="1.900" ry="0.900" fill="#a85a55"/>
    <!-- collar -->
    <path d="M239.800 289.600l6.900-1.300 2.500 10.100-4.200 1.600z" fill="#eceae6"/>
    <!-- coat -->
    <path d="M216.800 304.700l6.200-5 8-5.100 9.400-4.100 5.600 9.500 7 0 4.700 14 7.900 22 6.900 22 3.200 22 0 3h-54l-4-31-1.900-25z" fill="#37434a"/>
    <path d="M246 300l7 0-3 30-7-18z" fill="#29333a"/>
    <path d="M216.800 305l9-4 6 50-4 31h-6.500l-3.800-28-1.900-25z" fill="#2b363e"/>
    <path d="M232 350l14 12-8 20h-10z" fill="#2a353c"/>
    <!-- cuff and hand -->
    <path d="M248.300 361l5.500-1.500 1.500 9-5 1.500z" fill="#e9e6e2"/>
    <path d="M251 369.500l5 0.500 3 6 1 5.500h-5l-3-6z" fill="#d9b5a5"/>
    <path d="M269.500 371l3.500 3 2.500 7.500h-4l-2.500-6z" fill="#d4ad9d"/>
  </g>
</svg>
<div id="winborder" class="abs" style="left:0;top:25px;width:1px;height:406px;background:#8c8c8c"></div>
<div id="status">
  <span class="st" style="left:5.500px">幻灯片 第 1 张，共 1 张</span>
  <span class="st" style="left:140.500px">中文(中国)</span>
  <span class="st" style="left:297.500px">备注</span>
  <span class="st" style="left:342.500px">批注</span>
  <span class="st" style="left:588.500px;font-size:9.500px">57%</span>
  <div class="abs" style="left:375px;top:0;width:27.5px;height:14px;background:#c8c8c8"></div>
  <svg class="abs" style="left:0;top:-0.6px" width="640" height="14" viewBox="0 417 640 14" fill="none">
    <!-- spell check -->
    <g stroke="#858585" stroke-width="0.900">
      <path d="M117.500 420.500h4v7h-4zM121.500 420.500h4.500v3.500M121.500 427.500h2"/>
      <path d="M123.500 426l1.500 1.500 2.500-3"/>
    </g>
    <!-- notes -->
    <g stroke="#5e5e5e" stroke-width="1">
      <path d="M285.500 425.500h8M285.500 427.500h8"/>
      <path d="M287 423.500l2.500-2.500 2.500 2.500z" fill="#5e5e5e" stroke="none"/>
    </g>
    <!-- comments -->
    <path d="M330.500 420.500h9.500v6h-5l-2.500 2.500v-2.500h-2z" fill="#4f4f4f"/>
    <!-- normal view -->
    <g stroke="#5a5a5a" stroke-width="1">
      <rect x="384.500" y="420.500" width="9" height="8"/>
      <path d="M384.500 426.500h9M386.500 420.500v6"/>
    </g>
    <!-- sorter -->
    <g stroke="#6a6a6a" stroke-width="0.900">
      <rect x="411.500" y="420.500" width="4" height="3"/><rect x="418" y="420.500" width="4" height="3"/>
      <rect x="411.500" y="425.500" width="4" height="3"/><rect x="418" y="425.500" width="4" height="3"/>
    </g>
    <!-- reading view -->
    <g stroke="#6a6a6a" stroke-width="0.900">
      <path d="M440.500 421.500l4.500-1v8l-4.500-1zM449.500 421.500l-4.500-1v8l4.500-1z"/>
      <path d="M442 423h2M442 425h2M446 423h2M446 425h2"/>
    </g>
    <!-- slideshow -->
    <g stroke="#6a6a6a" stroke-width="0.900">
      <path d="M468 420.500h10M469.500 420.500v4h7v-4M473 424.500v3M470.500 428h5"/>
    </g>
    <!-- zoom slider -->
    <path d="M491 424.500h4.500" stroke="#444" stroke-width="1.300"/>
    <path d="M499 424.500h73" stroke="#9a9a9a" stroke-width="0.900"/>
    <path d="M535.800 422.500v4" stroke="#9a9a9a" stroke-width="0.900"/>
    <rect x="517" y="420" width="3.500" height="9" fill="#555"/>
    <path d="M575.500 424.500h5M578 422v5" stroke="#444" stroke-width="1.300"/>
    <!-- fit -->
    <g stroke="#5a5a5a" stroke-width="0.900">
      <rect x="618" y="420.500" width="9" height="8"/>
      <path d="M620 422.500l1.500 1.500M625 422.500l-1.500 1.500M620 426.500l1.500-1.500M625 426.500l-1.500-1.500"/>
    </g>
    <g fill="#5a5a5a"><path d="M619.500 422h2l-2 2zM625.500 422v2l-2-2zM619.500 427v-2l2 2zM625.500 427h-2l2-2z"/></g>
  </svg>
</div>
</body>
</html>
